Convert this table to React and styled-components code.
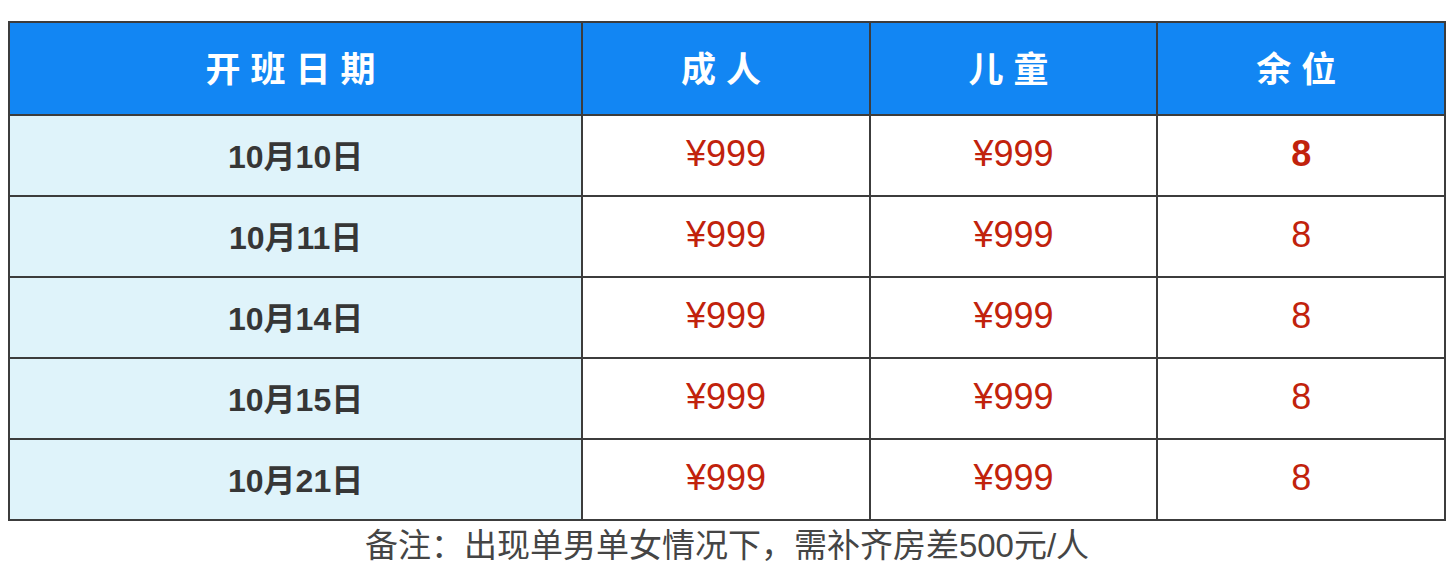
import React from 'react';
import styled, { createGlobalStyle } from 'styled-components';

const GlobalStyle = createGlobalStyle`
  body {
    margin: 8px;
    background: #ffffff;
    font-family: "Liberation Sans", "Noto Sans CJK SC", sans-serif;
  }
`;

const Wrap = styled.div`
  padding-top: 13px;
`;

const Table = styled.table`
  width: 100%;
  border-collapse: collapse;
  table-layout: fixed;
  border: 2px solid #3c3c3c;
`;

const HeadCell = styled.th`
  height: 86px;
  padding: 0 0 5px 0;
  background: #1286f3;
  color: #ffffff;
  font-size: 35px;
  font-weight: 700;
  letter-spacing: 10px;
  border: 2px solid #3c3c3c;
  text-align: center;
  vertical-align: middle;
  width: ${p => p.$w};
`;

const DateCell = styled.td`
  height: 75px;
  padding: 0 0 4px 0;
  background: #dff3fa;
  color: #363636;
  font-size: 32px;
  font-weight: 700;
  text-align: center;
  border: 2px solid #3c3c3c;
`;

const ValueCell = styled.td`
  height: 75px;
  padding: 0 0 4px 0;
  background: #ffffff;
  color: #c1220c;
  font-size: 36px;
  font-weight: ${p => (p.$bold ? 700 : 400)};
  text-align: center;
  border: 2px solid #3c3c3c;
`;

const Note = styled.div`
  text-align: center;
  font-size: 33px;
  line-height: 50px;
  color: #454545;
`;

const rows = [
  { date: '10月10日', adult: '¥999', child: '¥999', left: '8', bold: true },
  { date: '10月11日', adult: '¥999', child: '¥999', left: '8' },
  { date: '10月14日', adult: '¥999', child: '¥999', left: '8' },
  { date: '10月15日', adult: '¥999', child: '¥999', left: '8' },
  { date: '10月21日', adult: '¥999', child: '¥999', left: '8' },
];

const App = () => {
  return (
    <Wrap>
      <GlobalStyle />
      <Table>
        <thead>
          <tr>
            <HeadCell $w="40%">开班日期</HeadCell>
            <HeadCell $w="20%">成人</HeadCell>
            <HeadCell $w="20%">儿童</HeadCell>
            <HeadCell $w="20%">余位</HeadCell>
          </tr>
        </thead>
        <tbody>
          {rows.map((r) => (
            <tr key={r.date}>
              <DateCell>{r.date}</DateCell>
              <ValueCell>{r.adult}</ValueCell>
              <ValueCell>{r.child}</ValueCell>
              <ValueCell $bold={r.bold}>{r.left}</ValueCell>
            </tr>
          ))}
        </tbody>
      </Table>
      <Note>备注：出现单男单女情况下，需补齐房差500元/人</Note>
    </Wrap>
  );
};

export default App;
